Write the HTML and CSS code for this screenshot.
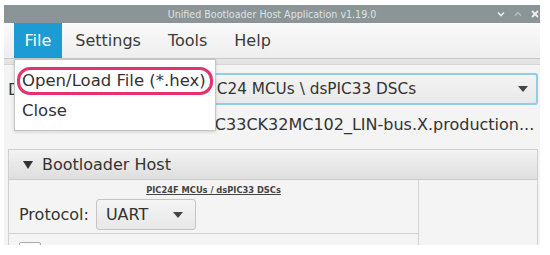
FILE: index.html
```html
<!DOCTYPE html>
<html lang="en">
<head>
    <meta charset="UTF-8">
    <meta name="viewport" content="width=device-width, initial-scale=1.0">
    <title>Unified Bootloader Host Application v1.19.0</title>
    <link rel="stylesheet" href="styles.css">
</head>
<body>

<div class="window">
    <div class="titlebar">
        <span class="title">Unified Bootloader Host Application v1.19.0</span>
        <div class="win-buttons">
            <svg width="8" height="6" viewBox="0 0 8 6"><path d="M1 1.5 L4 4.5 L7 1.5" fill="none" stroke="#e6eaea" stroke-width="1.6"/></svg>
            <svg width="8" height="6" viewBox="0 0 8 6"><path d="M1 4.5 L4 1.5 L7 4.5" fill="none" stroke="#b9c1c2" stroke-width="1.4"/></svg>
            <svg width="8" height="8" viewBox="0 0 8 8"><path d="M1 1 L7 7 M7 1 L1 7" fill="none" stroke="#eef1f1" stroke-width="1.8"/></svg>
        </div>
    </div>

    <nav class="menubar">
        <a class="menu active">File</a>
        <a class="menu">Settings</a>
        <a class="menu">Tools</a>
        <a class="menu">Help</a>
    </nav>

    <div class="toolstrip"></div>

    <div class="main">
        <div class="form">
            <label>Device:</label>
            <div class="combo wide">
                <span class="combo-value">PIC24 MCUs \ dsPIC33 DSCs</span>
                <span class="arrow"></span>
            </div>
            <span></span>
            <div class="path">dsPIC33CK32MC102_LIN-bus.X.production...</div>
        </div>

        <div class="panel">
            <div class="panel-head">
                <span class="tri"></span>
                Bootloader Host
            </div>
            <div class="panel-body">
                <div class="left-col">
                    <div class="family">PIC24F MCUs / dsPIC33 DSCs</div>
                    <div class="protocol-row">
                        <span>Protocol:</span>
                        <div class="combo small">
                            <span class="combo-value">UART</span>
                            <span class="arrow"></span>
                        </div>
                    </div>
                    <div class="check-row">
                        <span class="checkbox"></span>
                        <span class="check-label">Enable</span>
                    </div>
                </div>
                <div class="right-col"></div>
            </div>
        </div>
    </div>

    <!-- acik File menusu -->
    <div class="dropdown">
        <div class="item circled">Open/Load File (*.hex)</div>
        <div class="item">Close</div>
    </div>
</div>

</body>
</html>
```

FILE: styles.css
```css
body {
    margin: 0;
    background-color: #fff;
    font-family: "DejaVu Sans", sans-serif;
    color: #333;
}
.window {
    position: relative;
    width: 536px;
    height: 240px;
    margin: 5px 0 0 4px;
    overflow: hidden;
    background-color: #f4f4f4;
}
.titlebar {
    position: relative;
    height: 18px;
    background-color: #8b9597;
    display: flex;
    align-items: center;
    justify-content: center;
}
.title {
    font-family: "DejaVu Sans Condensed", "DejaVu Sans", sans-serif;
    font-size: 10.6px;
    color: #dfe3e3;
}
.win-buttons {
    position: absolute;
    right: 0;
    top: 0;
    height: 18px;
    display: flex;
    align-items: center;
    gap: 9px;
    padding-right: 1px;
}
.menubar {
    display: flex;
    height: 35px;
    padding-left: 10px;
    background: linear-gradient(#fafafa, #eeeeee);
    border-bottom: 1px solid #c9c9c9;
}
.menu {
    display: flex;
    align-items: center;
    padding: 0 13.5px;
    font-size: 16px;
    color: #3a3a3a;
}
.menu.active {
    background-color: #1d9bd5;
    color: #fff;
    padding: 0 10.5px;
}
.toolstrip {
    height: 5px;
    background-color: #e4e4e4;
    border-bottom: 1px solid #d6d6d6;
}
.main {
    padding: 0 2px 0 4px;
}
.form {
    display: grid;
    grid-template-columns: 174px 1fr;
    row-gap: 3px;
    align-items: center;
    padding-top: 8px;
}
.form label {
    font-size: 16px;
}
.combo {
    display: flex;
    align-items: center;
    justify-content: space-between;
    box-sizing: border-box;
    background: linear-gradient(#f4f4f4, #e8e8e8);
    border: 1px solid #c4c4c4;
    border-radius: 3px;
    font-size: 16px;
}
.combo.wide {
    height: 32px;
    padding: 0 8px 0 19px;
    font-size: 15.3px;
    border: 2px solid #8ccfe6;
}
.combo.small {
    width: 100px;
    height: 31px;
    padding: 0 12px 0 9px;
}
.arrow {
    width: 0;
    height: 0;
    border-left: 5px solid transparent;
    border-right: 5px solid transparent;
    border-top: 6px solid #444;
}
.path {
    font-size: 16px;
    height: 33px;
    line-height: 33px;
    white-space: nowrap;
}
.panel {
    margin-top: 8px;
    border: 1px solid #d0d0d0;
}
.panel-head {
    display: flex;
    align-items: center;
    gap: 9px;
    height: 29px;
    padding-left: 14px;
    font-size: 16px;
    background: linear-gradient(#f3f3f3, #dedede);
    border-bottom: 1px solid #cbcbcb;
}
.tri {
    width: 0;
    height: 0;
    border-left: 5px solid transparent;
    border-right: 5px solid transparent;
    border-top: 8px solid #333;
}
.panel-body {
    display: flex;
    height: 80px;
}
.left-col {
    width: 409px;
    border-right: 1px solid #d2d2d2;
}
.right-col {
    flex: 1;
}
.family {
    text-align: center;
    font-size: 8.3px;
    font-weight: bold;
    text-decoration: underline;
    color: #444;
    padding-top: 5px;
}
.protocol-row {
    display: flex;
    align-items: center;
    gap: 7px;
    padding: 4px 0 3px 10px;
    font-size: 16px;
    border-bottom: 1px solid #d2d2d2;
}
.check-row {
    display: flex;
    align-items: center;
    gap: 8px;
    padding: 8px 10px;
    font-size: 14px;
}
.checkbox {
    width: 20px;
    height: 20px;
    border: 1px solid #aaa;
    border-radius: 2px;
    background-color: #fafafa;
}
.dropdown {
    position: absolute;
    left: 10px;
    top: 54px;
    width: 200px;
    height: 70px;
    background-color: #fff;
    border: 1px solid #c6c6c6;
    box-shadow: 0 1px 3px rgba(0, 0, 0, 0.15);
}
.item {
    font-size: 16.5px;
    padding-left: 7px;
    height: 31px;
    line-height: 31px;
}
.item.circled {
    margin: 7px 2px 0 2px;
    height: 22px;
    line-height: 22px;
    padding-left: 2px;
    border: 3px solid #e2336f;
    border-radius: 13px;
}
```
